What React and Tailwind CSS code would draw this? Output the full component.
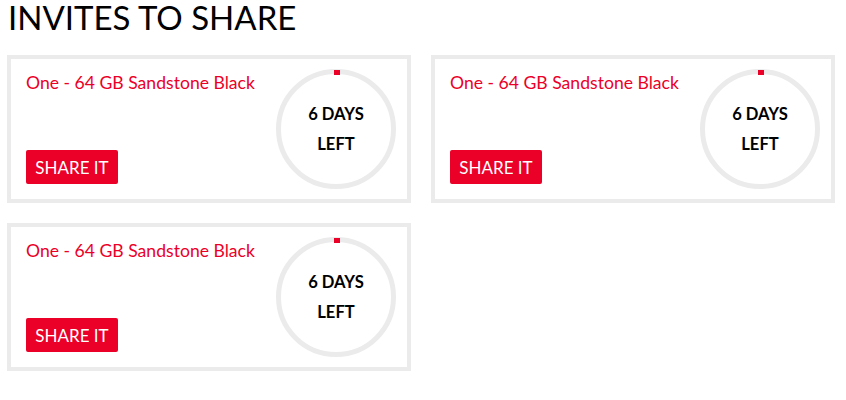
export default function App() {
  const items = [1, 2, 3];
  return (
    <div className="bg-white w-[846px] h-[400px] pl-[7px] pt-[1px] font-['Lato',sans-serif]">
      <h1 className="text-[33px] leading-[40px] font-normal text-black pl-[1px] -mt-[4px]">INVITES TO SHARE</h1>
      <div className="mt-[18px] flex flex-wrap gap-x-[20px] gap-y-[20px] w-[830px]">
        {items.map((i) => (
          <div
            key={i}
            className="w-[404px] h-[148px] border-4 border-[#ebebeb] pl-[15px] pr-[11px] py-[10px] flex items-center justify-between"
          >
            <div className="h-full flex flex-col justify-between pt-[2px] pb-[5px]">
              <div className="text-[17.6px] leading-[24px] text-[#eb0028]">One - 64 GB Sandstone Black</div>
              <button className="w-[92px] h-[34px] bg-[#eb0028] text-white text-[17px] leading-none rounded-[2px] flex items-center justify-center">
                SHARE IT
              </button>
            </div>
            <div className="relative w-[120px] h-[120px] rounded-full border-[5px] border-[#ebebeb] flex flex-col items-center justify-center text-[16.6px] font-bold leading-[30px] text-black">
              <span className="absolute top-[-4px] left-[53px] w-[6px] h-[5px] bg-[#eb0028]"></span>
              <div>6 DAYS</div>
              <div>LEFT</div>
            </div>
          </div>
        ))}
      </div>
    </div>
  );
}
